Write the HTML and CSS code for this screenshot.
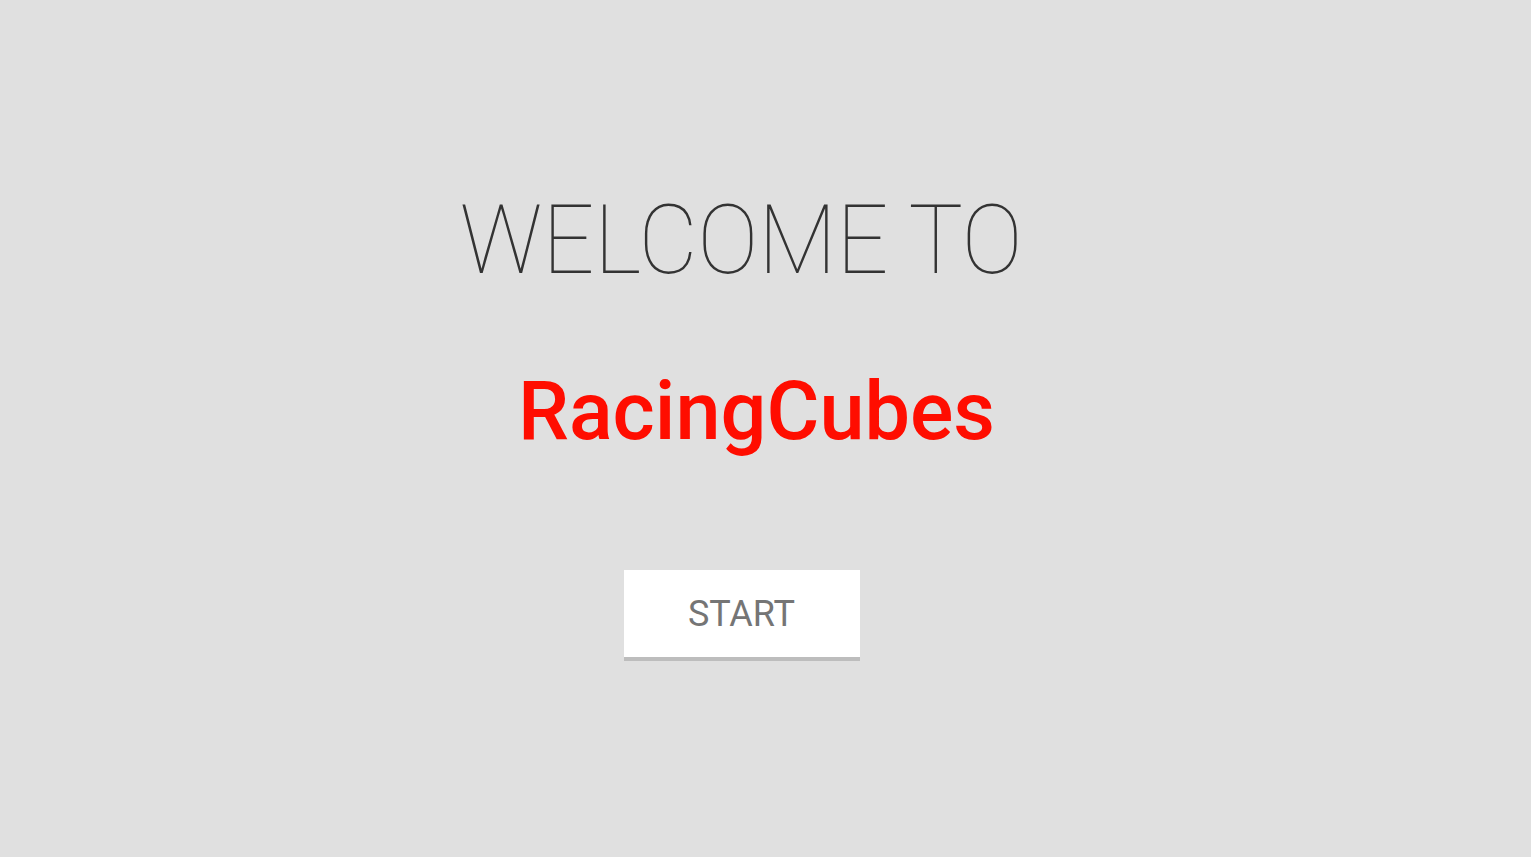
FILE: index.html
```html
<!DOCTYPE html>
<html>
<head>
<meta charset="utf-8">
<link rel="stylesheet" href="styles.css">
</head>
<body>
<main class="screen">
  <h1 class="welcome">WELCOME TO</h1>
  <h2 class="title">RacingCubes</h2>
  <button class="start">START</button>
</main>
</body>
</html>
```
FILE: styles.css
```css
html, body {
  margin: 0;
  padding: 0;
  height: 100%;
}
body {
  background: #e0e0e0;
  font-family: Roboto, "Liberation Sans", sans-serif;
}
.screen {
  display: flex;
  flex-direction: column;
  align-items: center;
  padding-top: 184px;
  padding-right: 48px;
}
.welcome {
  margin: 0;
  font-size: 96px;
  font-weight: 100;
  color: #333333;
  line-height: normal;
  transform: scaleX(0.95);
}
.title {
  margin: 70px 0 0 30px;
  font-size: 81px;
  font-weight: 500;
  color: #ff0d00;
  line-height: 92px;
}
.start {
  margin-top: 112px;
  width: 236px;
  height: 91px;
  border: none;
  border-bottom: 4px solid #bdbdbd;
  background: #ffffff;
  font-family: Roboto, "Liberation Sans", sans-serif;
  font-size: 36px;
  font-weight: 400;
  color: #757575;
  padding: 0;
}
```
